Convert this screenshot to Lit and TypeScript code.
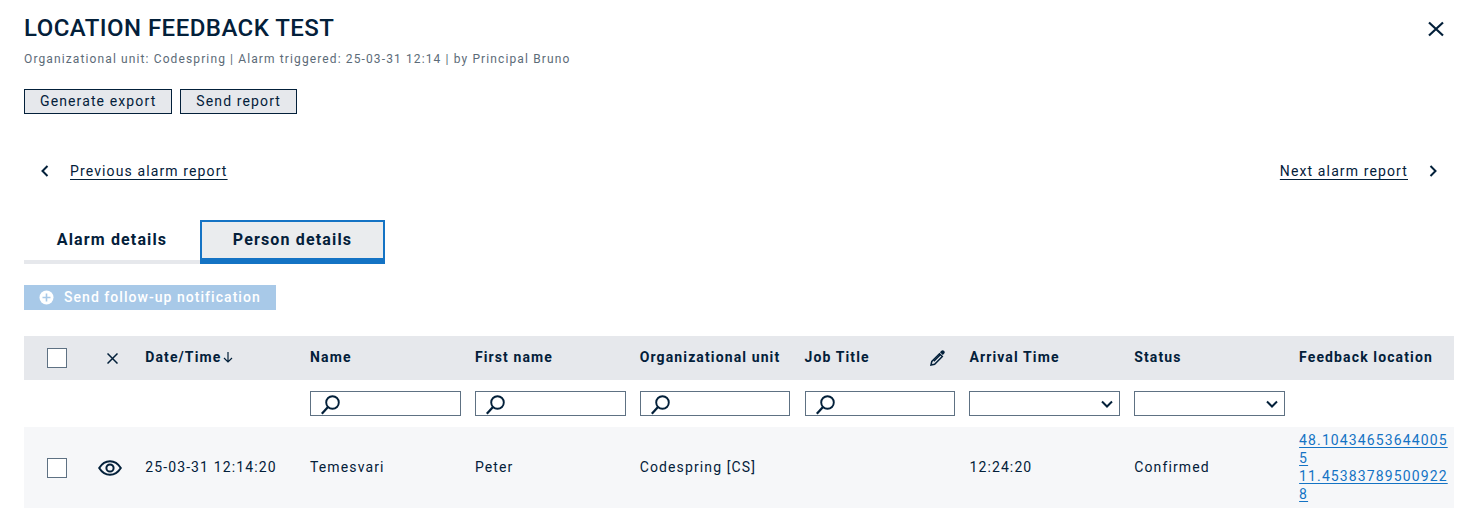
import { LitElement, html, css } from "lit";
import { customElement } from "lit/decorators.js";

const search = html`<svg class="search" width="22" height="22" viewBox="0 0 22 22" fill="none" stroke="#03203a"><circle cx="11.500" cy="9.500" r="6.300" stroke-width="1.900"/><path d="M7 14 .8 20.800" stroke-width="2.300"/></svg>`;
const chev = html`<svg class="chev" width="14" height="14" viewBox="0 0 14 14" fill="none" stroke="#03203a" stroke-width="2"><path d="M2 4.500 7 9.500 12 4.500"/></svg>`;

@customElement("app-root")
export class AppRoot extends LitElement {
  static styles = css`
    :host { display: block; width: 1472px; height: 518px; overflow: hidden; background: #fff; font-family: Roboto, sans-serif; color: #03203a; font-size: 14px; letter-spacing: 1.12px; }
    * { box-sizing: border-box; }
    .page { padding: 14px 18px 0 24px; position: relative; }
    h1 { margin: 0; font-size: 24px; line-height: 28px; font-weight: 500; letter-spacing: 0.46px; }
    .sub { margin-top: 9px; font-size: 12px; line-height: 16px; color: #5c6b78; letter-spacing: 1.12px; }
    .close { position: absolute; top: 21px; right: 28px; display: block; }
    .btns { display: flex; gap: 8px; margin-top: 22px; }
    .btn { height: 25px; padding: 0 15px 2px; border: 1px solid #03203a; background: #e6e8ec; display: flex; align-items: center; font-size: 14px; }
    .nav { display: flex; justify-content: space-between; align-items: center; margin-top: 46px; height: 22px; }
    .nav a { color: #03203a; text-decoration: underline; text-underline-offset: 3px; }
    .side { display: flex; align-items: center; }
    .prev { gap: 18px; padding-left: 14px; }
    .next { gap: 18px; padding-right: 14px; }
    .tabs { display: flex; margin-top: 38px; height: 44px; }
    .tab { font-weight: 700; font-size: 16px; letter-spacing: 1.15px; display: flex; align-items: center; justify-content: center; padding-bottom: 2px; }
    .t1 { width: 176px; border-bottom: 4px solid #e6e8ec; }
    .t2 { width: 185px; background: #eaecee; border: 2px solid #1473c4; border-bottom-width: 6px; padding-bottom: 1px; }
    .follow { margin-top: 21px; width: 252px; height: 25px; background: #a8c9e8; color: #fff; display: flex; align-items: center; gap: 10px; padding: 0 0 2px 15px; font-weight: 500; letter-spacing: 1.04px; }
    .follow svg { margin-top: 2px; }
    .row { display: grid; grid-template-columns: 121.2px repeat(7, 164.85px) 1fr; }
    .head { margin-top: 26px; height: 44px; background: #e6e8ec; font-weight: 700; align-items: center; padding-bottom: 2px; }
    .filters { height: 47px; align-items: center; }
    .data { height: 81px; background: #f6f7f9; align-items: center; }
    .data .cell, .data .links { padding-bottom: 2px; }
    .lead { display: grid; grid-template-columns: 51px 1fr; align-items: center; padding-left: 23px; }
    .box { width: 20px; height: 20px; border: 1px solid #5e7183; background: #fff; }
    .head .lead { padding-top: 2px; }
    .x { margin-left: 9px; margin-top: 1px; }
    .cell { position: relative; display: flex; align-items: center; }
    .f { width: 150.7px; height: 25px; border: 1px solid #5e7183; background: #fff; display: flex; align-items: center; }
    .search { margin-left: 10px; }
    .chev { margin-left: auto; margin-right: 5px; }
    .pen { position: absolute; left: 123px; top: 50%; margin-top: -8px; }
    .date svg { margin-left: 1px; }
    .links { line-height: 18px; word-break: break-all; width: 150px; }
    .links a { color: #1473c4; text-decoration: underline; display: block; text-underline-offset: 2px; }
  `;

  render() {
    return html`<div class="page">
      <h1>LOCATION FEEDBACK TEST</h1>
      <div class="sub">Organizational unit: Codespring | Alarm triggered: 25-03-31 12:14 | by Principal Bruno</div>
      <svg class="close" width="16" height="16" viewBox="0 0 16 16" stroke="#03203a" stroke-width="2.200"><path d="M1 1.500 15 14.500M15 1.500 1 14.500"/></svg>
      <div class="btns"><div class="btn">Generate export</div><div class="btn">Send report</div></div>
      <div class="nav">
        <div class="side prev">
          <svg width="14" height="14" viewBox="0 0 14 14" fill="none" stroke="#03203a" stroke-width="2"><path d="M9.500 2 4.500 7 9.500 12"/></svg>
          <a>Previous alarm report</a>
        </div>
        <div class="side next">
          <a>Next alarm report</a>
          <svg width="14" height="14" viewBox="0 0 14 14" fill="none" stroke="#03203a" stroke-width="2"><path d="M4.500 2 9.500 7 4.500 12"/></svg>
        </div>
      </div>
      <div class="tabs"><div class="tab t1">Alarm details</div><div class="tab t2">Person details</div></div>
      <div class="follow">
        <svg width="15" height="15" viewBox="0 0 15 15"><circle cx="7.500" cy="7.500" r="7" fill="#fff"/><path d="M7.500 3.500v8M3.500 7.500h8" stroke="#a8c9e8" stroke-width="1.600"/></svg>
        <span>Send follow-up notification</span>
      </div>
      <div class="row head">
        <div class="lead"><div class="box"></div>
          <svg class="x" width="11" height="11" viewBox="0 0 11 11" stroke="#03203a" stroke-width="1.500"><path d="M.5.500 10.500 10.500M10.500.500.500 10.500"/></svg>
        </div>
        <div class="cell date">Date/Time<svg width="12" height="12" viewBox="0 0 12 12" fill="none" stroke="#03203a" stroke-width="1.200"><path d="M6 1v10M2 7l4 4 4-4"/></svg></div>
        <div class="cell">Name</div><div class="cell">First name</div><div class="cell">Organizational unit</div>
        <div class="cell">Job Title
          <svg class="pen" width="18" height="18" viewBox="0 0 18 18" fill="none" stroke="#03203a" stroke-width="1.500"><path d="M3 16l.8-3.600 7.700-7.700 2.800 2.800-7.700 7.700z"/><path d="M5.800 12.200l6.500-6.500" /><path d="M13 3.200l.9-.9a1.100 1.100 0 0 1 1.500 0l.3.300a1.100 1.100 0 0 1 0 1.500l-.9.900z" fill="#03203a"/></svg>
        </div>
        <div class="cell">Arrival Time</div><div class="cell">Status</div><div class="cell">Feedback location</div>
      </div>
      <div class="row filters">
        <div></div><div></div>
        <div class="cell"><div class="f">${search}</div></div>
        <div class="cell"><div class="f">${search}</div></div>
        <div class="cell"><div class="f">${search}</div></div>
        <div class="cell"><div class="f">${search}</div></div>
        <div class="cell"><div class="f">${chev}</div></div>
        <div class="cell"><div class="f">${chev}</div></div>
        <div></div>
      </div>
      <div class="row data">
        <div class="lead"><div class="box"></div>
          <svg width="24" height="16" viewBox="0 0 24 16" fill="none" stroke="#03203a" stroke-width="2"><path d="M1.200 8C4 3.500 8 1.200 12 1.200S20 3.500 22.800 8c-2.800 4.500-6.800 6.800-10.800 6.800S4 12.500 1.200 8Z"/><circle cx="12" cy="8" r="3.600"/></svg>
        </div>
        <div class="cell">25-03-31 12:14:20</div>
        <div class="cell">Temesvari</div><div class="cell">Peter</div><div class="cell">Codespring [CS]</div>
        <div class="cell"></div><div class="cell">12:24:20</div><div class="cell">Confirmed</div>
        <div class="links"><a>48.104346536440055</a><a>11.453837895009228</a></div>
      </div>
    </div>`;
  }
}
